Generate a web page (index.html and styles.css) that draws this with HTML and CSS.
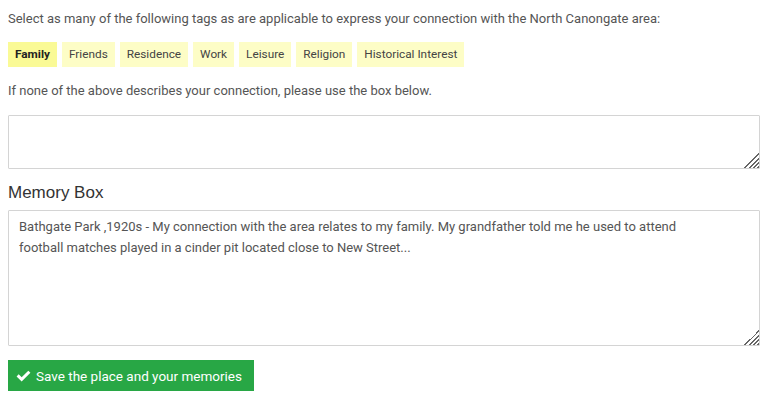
FILE: index.html
```html
<!DOCTYPE html>
<html>
<head>
<meta charset="utf-8">
<link rel="stylesheet" href="styles.css">
</head>
<body>
<form class="form">
  <p class="intro">Select as many of the following tags as are applicable to express your connection with the North Canongate area:</p>
  <div class="tags">
    <span class="tag tag-active">Family</span>
    <span class="tag">Friends</span>
    <span class="tag">Residence</span>
    <span class="tag">Work</span>
    <span class="tag">Leisure</span>
    <span class="tag">Religion</span>
    <span class="tag">Historical Interest</span>
  </div>
  <p class="intro">If none of the above describes your connection, please use the box below.</p>
  <textarea class="box box-small"></textarea>
  <h3 class="heading">Memory Box</h3>
  <textarea class="box box-large">Bathgate Park ,1920s - My connection with the area relates to my family. My grandfather told me he used to attend football matches played in a cinder pit located close to New Street...</textarea>
  <button type="button" class="btn">
    <svg class="check" viewBox="0 0 16 13" width="15" height="12"><path d="M0.5 7 L2.8 4.7 L6 7.9 L13.2 0.7 L15.5 3 L6 12.5 Z" fill="#fff"/></svg>
    Save the place and your memories
  </button>
</form>
</body>
</html>
```
FILE: styles.css
```css
html, body { background: #fff; }
body {
  margin: 8px;
  font-family: Roboto, "Liberation Sans", sans-serif;
  font-size: 13px;
  color: #555;
}
.form { display: flex; flex-direction: column; align-items: flex-start; }
.intro { margin: 2px 0 0; line-height: 18px; }
.tags { display: flex; gap: 5px; margin: 14px 0 13px; }
.tag {
  background: #fdfdc6;
  color: #444;
  font-size: 11.8px;
  height: 25px;
  line-height: 25px;
  padding: 0 7px;
}
.tag-active { background: #fafa96; font-weight: bold; color: #222; }
.box {
  box-sizing: border-box;
  width: 752px;
  border: 1px solid #d4d4d4;
  border-radius: 1px;
  font-family: Roboto, "Liberation Sans", sans-serif;
  font-size: 13px;
  color: #555;
  padding: 5px 50px 5px 10px;
  line-height: 21px;
  margin: 0;
}
.box::-webkit-resizer {
  background:
    linear-gradient(to bottom right, #fff 50%, transparent 50%),
    repeating-linear-gradient(135deg, #fff 0 1.5px, #666 1.5px 3px);
}
.box-small { height: 54px; margin-top: 15px; }
.box-large { height: 136px; }
.heading {
  font-family: "Liberation Sans", Arial, sans-serif;
  font-weight: normal;
  font-size: 17px;
  color: #333;
  margin: 14px 0 7px;
  line-height: 20px;
}
.btn {
  margin-top: 14px;
  background: #28a745;
  border: none;
  color: #fff;
  font-family: Roboto, "Liberation Sans", sans-serif;
  font-size: 13.5px;
  height: 31px;
  width: 246px;
  padding: 0 8px;
  display: flex;
  align-items: center;
  gap: 5px;
}
.check { display: block; }
```
